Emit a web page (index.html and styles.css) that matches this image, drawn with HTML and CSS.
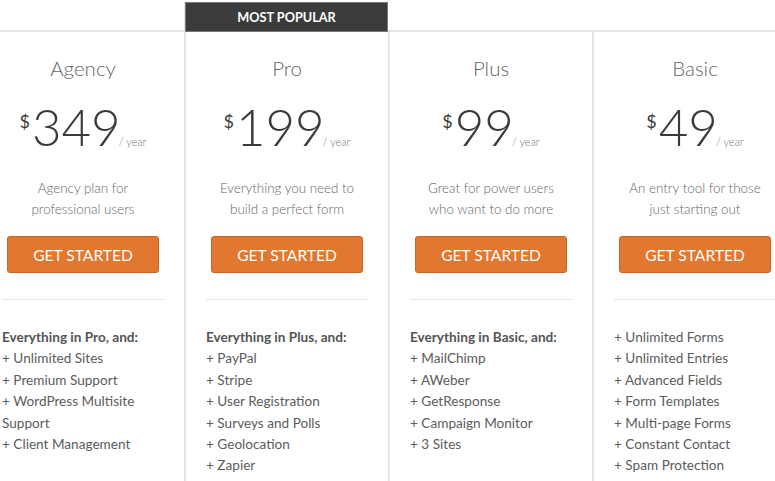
FILE: index.html
```html
<!DOCTYPE html>
<html lang="en">
<head>
<meta charset="utf-8">
<title>Pricing</title>
<link rel="stylesheet" href="styles.css">
</head>
<body>
<div class="plans">
  <section class="plan">
    <h2 class="plan-name">Agency</h2>
    <div class="price"><span class="currency">$</span><span class="amount">349</span><span class="period">/ year</span></div>
    <p class="desc">Agency plan for<br>professional users</p>
    <div class="cta"><a class="btn" href="#">GET STARTED</a></div>
    <hr class="sep">
    <ul class="features">
      <li class="lead">Everything in Pro, and:</li>
      <li>+ Unlimited Sites</li>
      <li>+ Premium Support</li>
      <li>+ WordPress Multisite Support</li>
      <li>+ Client Management</li>
    </ul>
  </section>
  <section class="plan popular">
    <div class="badge">MOST POPULAR</div>
    <h2 class="plan-name">Pro</h2>
    <div class="price"><span class="currency">$</span><span class="amount">199</span><span class="period">/ year</span></div>
    <p class="desc">Everything you need to<br>build a perfect form</p>
    <div class="cta"><a class="btn" href="#">GET STARTED</a></div>
    <hr class="sep">
    <ul class="features">
      <li class="lead">Everything in Plus, and:</li>
      <li>+ PayPal</li>
      <li>+ Stripe</li>
      <li>+ User Registration</li>
      <li>+ Surveys and Polls</li>
      <li>+ Geolocation</li>
      <li>+ Zapier</li>
    </ul>
  </section>
  <section class="plan">
    <h2 class="plan-name">Plus</h2>
    <div class="price"><span class="currency">$</span><span class="amount">99</span><span class="period">/ year</span></div>
    <p class="desc">Great for power users<br>who want to do more</p>
    <div class="cta"><a class="btn" href="#">GET STARTED</a></div>
    <hr class="sep">
    <ul class="features">
      <li class="lead">Everything in Basic, and:</li>
      <li>+ MailChimp</li>
      <li>+ AWeber</li>
      <li>+ GetResponse</li>
      <li>+ Campaign Monitor</li>
      <li>+ 3 Sites</li>
    </ul>
  </section>
  <section class="plan">
    <h2 class="plan-name">Basic</h2>
    <div class="price"><span class="currency">$</span><span class="amount">49</span><span class="period">/ year</span></div>
    <p class="desc">An entry tool for those<br>just starting out</p>
    <div class="cta"><a class="btn" href="#">GET STARTED</a></div>
    <hr class="sep">
    <ul class="features">
      <li>+ Unlimited Forms</li>
      <li>+ Unlimited Entries</li>
      <li>+ Advanced Fields</li>
      <li>+ Form Templates</li>
      <li>+ Multi-page Forms</li>
      <li>+ Constant Contact</li>
      <li>+ Spam Protection</li>
    </ul>
  </section>
</div>
</body>
</html>
```

FILE: styles.css
```css
html, body {
  margin: 0;
  padding: 0;
  background: #fff;
  overflow: hidden;
}

body {
  font-family: Lato, "Open Sans", sans-serif;
  color: #5a5a5a;
}

.plans {
  display: flex;
  align-items: flex-start;
  margin-left: -20px;
  padding-top: 2px;
  width: 900px;
}

.plan {
  flex: 0 0 204px;
  box-sizing: border-box;
  width: 204px;
  margin-top: 28px;
  padding: 23px 20px 40px 20px;
  border-left: 2px solid #e4e4e4;
  border-top: 2px solid #e4e4e4;
  text-align: center;
}

.plan.popular {
  margin-top: 0;
  border-top: none;
  padding-top: 0;
}

.badge {
  box-sizing: border-box;
  height: 30px;
  margin: 0 -20px 23px -21px;
  background: #3b3b3b;
  border: 1px solid #7a7a7a;
  color: #fff;
  font-weight: 700;
  font-size: 12.7px;
  line-height: 28px;
  text-align: center;
}

.plan-name {
  margin: 0;
  font-size: 20.5px;
  line-height: 26px;
  font-weight: 300;
  color: #666;
}

.price {
  display: flex;
  justify-content: center;
  align-items: flex-start;
  margin-top: 20px;
  height: 52px;
  color: #3a3a3a;
}

.currency {
  font-size: 18px;
  line-height: 18px;
  font-weight: 400;
  margin-top: 11px;
  margin-right: 2px;
}

.amount {
  font-size: 51px;
  line-height: 52px;
  font-weight: 300;
}

.period {
  align-self: flex-end;
  font-size: 11px;
  line-height: 11px;
  font-weight: 300;
  color: #777;
  margin: 0 0 6px -2px;
}

.desc {
  margin: 25px 0 0 0;
  font-size: 13.4px;
  line-height: 21px;
  font-weight: 300;
  color: #666;
}

.cta {
  margin-top: 16px;
}

.btn {
  display: block;
  box-sizing: border-box;
  width: 152px;
  height: 37px;
  margin: 0 auto;
  background: #e27730;
  border: 1px solid #c8651f;
  border-radius: 3px;
  color: #fff;
  font-size: 15.6px;
  line-height: 36px;
  font-weight: 400;
  text-decoration: none;
}

.sep {
  margin: 26px 0 0 0;
  border: none;
  border-top: 1px solid #e6e6e6;
  height: 0;
}

.features {
  list-style: none;
  margin: 27px 0 0 0;
  padding: 0;
  text-align: left;
  font-size: 13.6px;
  line-height: 21.4px;
  color: #5c5c5c;
}

.features .lead {
  font-weight: 700;
  color: #555;
}
```
